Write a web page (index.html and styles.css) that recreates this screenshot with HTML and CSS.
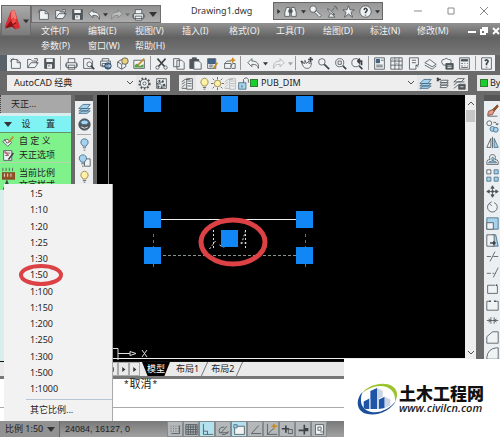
FILE: index.html
```html
<!DOCTYPE html>
<html lang="zh-CN">
<head>
<meta charset="utf-8">
<title>Drawing1.dwg</title>
<link rel="stylesheet" href="styles.css">
</head>
<body>
<svg class="sprite" aria-hidden="true">
  <symbol id="new" viewBox="0 0 16 16"><path class="p" d="M3 3h7l4 4v7H3z"/><path d="M10 3v4h4M2 2l2 2M5 1v2M1 5h2"/></symbol>
  <symbol id="open" viewBox="0 0 16 16"><path class="p" d="M2 13V3h4l2 2h5v3M2 13l4-6h9l-4 6zM10 2h4v3"/></symbol>
  <symbol id="save" viewBox="0 0 16 16"><path class="d" d="M2 2h12v12H2z"/><path class="w" d="M4 2h8v4H4zM5 9h6v5H5z"/><path d="M6 11h3"/></symbol>
  <symbol id="print" viewBox="0 0 16 16"><path class="p" d="M4 7V2h8v5M2 7h12v6H2zM4 10h8v5H4z"/><path d="M1 8v4M15 8v4"/></symbol>
  <symbol id="preview" viewBox="0 0 16 16"><path class="p" d="M2 2h8l3 3v9H2z"/><circle class="p" cx="9" cy="9" r="3"/><path class="bold" d="m11 11 4 4"/></symbol>
  <symbol id="publish" viewBox="0 0 16 16"><path class="p" d="M4 5V2h8v3M2 5h12v6H2zM4 8h7v4H4z"/><circle class="blue" cx="11" cy="11" r="4"/><path class="l" d="M8 11h6m-2-2 2 2-2 2"/></symbol>
  <symbol id="cube" viewBox="0 0 16 16"><path class="p" d="m2 6 5-3 5 3v6l-5 3-5-3zM2 6l5 3 5-3M7 9v6"/><circle class="gold" cx="11" cy="5" r="4"/></symbol>
  <symbol id="sheet" viewBox="0 0 16 16"><path class="p" d="M1 4h13v10H1z"/><path class="green" d="m2 10 3-2 3 3 5-2v4H2z"/><path class="goldline" d="m6 10 8-8"/></symbol>
  <symbol id="cut" viewBox="0 0 16 16"><path class="bold" d="m3 2 9 10M13 2 4 12"/><circle class="p" cx="3" cy="13" r="2"/><circle class="p" cx="13" cy="13" r="2"/></symbol>
  <symbol id="copy" viewBox="0 0 16 16"><path class="p" d="M2 2h7v10H2zM6 4h6l3 3v8H6z"/></symbol>
  <symbol id="paste" viewBox="0 0 16 16"><path class="d" d="M1 3h11v11H1zM4 1h5v3H4z"/><path class="p" d="M6 5h6l3 3v7H6z"/></symbol>
  <symbol id="match" viewBox="0 0 16 16"><path class="p" d="M2 2h10v12H2z"/><path class="blue" d="M3 3h8v5H3z"/><path d="M4 10h5M4 12h4"/><path class="goldline" d="m14 7-5 7"/></symbol>
  <symbol id="brush" viewBox="0 0 16 16"><path class="p" d="M2 2h10v12H2z"/><path d="M4 5h6M4 8h4"/><path class="pinkline" d="m3 3 5 5"/><path class="bold" d="m14 5-6 8"/></symbol>
  <symbol id="custom" viewBox="0 0 16 16"><path class="p" d="m1 8 5-3 6 4-5 5z"/><path class="goldline" d="m14 2-6 7"/><path d="m3 5 3 5M6 10l3-1"/></symbol>
  <symbol id="text" viewBox="0 0 16 16"><path class="bold" d="m2 13 4-10 4 10M3 9h6"/><circle cx="12" cy="11" r="2"/></symbol>
  <symbol id="blockedit" viewBox="0 0 16 16"><path class="p" d="M2 8h8v6H2zM2 8l3-3h5"/><path d="m9 12 3-4h3v6h-4"/><path class="goldline" d="M9 4h6M12 1v6"/></symbol>
  <symbol id="undo" viewBox="0 0 16 16"><path class="p" d="m1 7 5-5v3c6 0 9 3 8 9-1-4-3-5-8-5v3z"/></symbol>
  <symbol id="redo" viewBox="0 0 16 16"><path class="p" d="m15 7-5-5v3c-6 0-9 3-8 9 1-4 3-5 8-5v3z"/></symbol>
  <symbol id="pan" viewBox="0 0 16 16"><path class="p" d="m2 7 4 1V4l2 4 3-3v3l3-1c0 5-2 7-5 7-4 0-5-2-7-7z"/><path class="bold" d="M10 3h6M13 0v6M1 5l3 2"/></symbol>
  <symbol id="zoom" viewBox="0 0 16 16"><circle class="p" cx="6" cy="6" r="4"/><path class="bold" d="m9 9 6 6"/></symbol>
  <symbol id="zoomwin" viewBox="0 0 16 16"><circle class="p" cx="7" cy="7" r="5"/><path d="M5 5h4v4H5z"/><path class="bold" d="m11 11 4 4"/></symbol>
  <symbol id="zoomprev" viewBox="0 0 16 16"><circle class="p" cx="6" cy="7" r="5"/><path class="bold" d="m10 11 4 4M8 5h5v5M8 5l3-3M8 5l3 3"/></symbol>
  <symbol id="props" viewBox="0 0 16 16"><path class="p" d="M2 1h12v14H2z"/><path class="blue" d="M4 3h4v4H4z"/><path d="M10 4h3M4 10h8M4 12h8"/></symbol>
  <symbol id="gridwin" viewBox="0 0 16 16"><path class="p" d="M1 1h14v14H1z"/><path d="M6 1v14M11 1v14M1 5h14M1 10h14M3 3h1M8 3h1M8 8h1M13 12h1"/></symbol>
  <symbol id="toolpal" viewBox="0 0 16 16"><path class="p" d="M3 1h11v9h-3v5H3z"/><path d="M6 4h5M6 7h5M11 10l3 2"/></symbol>
  <symbol id="sheets" viewBox="0 0 16 16"><path class="p" d="m1 7 6-4 8 6-5 3zM1 10l9 5 5-4"/></symbol>
  <symbol id="markup" viewBox="0 0 16 16"><path class="p" d="M1 7q-1-4 3-4 2-3 5 0 5 0 3 4v3H3z"/><path class="d" d="M6 8h9v7H6z"/><path class="l" d="M8 11h5M8 13h5"/></symbol>
  <symbol id="calc" viewBox="0 0 16 16"><path class="p" d="M2 1h12v14H2z"/><path class="d" d="M4 3h8v2H4z"/><path d="M4 8h2m2 0h1m2 0h1M4 11h2m2 0h1m2 0h1M4 13h8"/></symbol>
  <symbol id="help" viewBox="0 0 16 16"><path class="p" d="M2 1h12v14H2z"/><path class="bold" d="M6 5q2-3 4 0 0 2-2 3v2M8 12v1"/></symbol>
  <symbol id="gear" viewBox="0 0 16 16"><circle class="gearring" cx="8" cy="8" r="6"/><circle class="p" cx="8" cy="8" r="5"/><circle class="p" cx="8" cy="8" r="2"/></symbol>
  <symbol id="gear2" viewBox="0 0 16 16"><path class="p" d="M2 2h12v12H2z"/><circle class="gearring" cx="7" cy="9" r="4"/><path d="M3 5l9 9M3 11l8-8M10 11h4"/></symbol>
  <symbol id="layers" viewBox="0 0 16 16"><path class="p" d="m5 7 2-3h8l-2 3zM5 10l2-3h8l-2 3zM5 13l2-3h8l-2 3z"/><path class="bold" d="M1 3h5M1 3l2-2M1 3l2 2"/></symbol>
  <symbol id="layerprops" viewBox="0 0 16 16"><path class="p" d="M1 6l4-3h6M1 9l4-3M1 13l4-4M7 2h7v13H7z"/><path d="M8 5h5M8 8h5M8 11h5M1 14h6"/></symbol>
  <symbol id="layerstate" viewBox="0 0 16 16"><path class="p" d="m1 6 5-4h8l-4 4zM1 10l5-4h8M1 14l5-4"/><path class="d" d="M7 9h8v6H7z"/><path class="l" d="M9 12h4"/></symbol>
  <symbol id="layerblue" viewBox="0 0 16 16"><path class="sky" d="m1 8 5-5h9l-4 5zM1 11l4-3h10l-4 3zM1 14l4-3h10l-4 3z"/></symbol>
  <symbol id="bulb" viewBox="0 0 16 16"><path class="yellow" d="M6 11q-4-4-2-7 4-5 8 0 2 3-2 7z"/><path d="M6 13h4M7 15h2"/></symbol>
  <symbol id="bluebulb" viewBox="0 0 16 16"><path class="sky" d="M6 10q-4-4-2-7 4-4 8 0 2 3-2 7z"/><path d="M6 12h4M7 15h2"/></symbol>
  <symbol id="boxbulb" viewBox="0 0 16 16"><path class="p" d="M8 6h7v9H8z"/><path class="sky" d="M4 10q-4-4-2-7 4-4 8 0 2 3-2 7z"/><path d="M4 12h4M5 15h2"/></symbol>
  <symbol id="sun" viewBox="0 0 16 16"><circle class="yellow" cx="8" cy="8" r="4"/><path d="M8 0v3M8 13v3M0 8h3M13 8h3M2 2l2 2M12 12l2 2M2 14l2-2M12 4l2-2"/></symbol>
  <symbol id="lock" viewBox="0 0 16 16"><path class="sky" d="M2 7h9v8H2z"/><path d="M8 7V3q3-4 6 0v4M6 10v3"/></symbol>
  <symbol id="palette" viewBox="0 0 16 16"><circle class="d" cx="8" cy="8" r="7"/><path class="sky" d="M3 5q5-5 10 0l-2 3H5z"/><path class="l" d="M4 11q4 3 8 0"/></symbol>
  <symbol id="erase" viewBox="0 0 16 16"><path class="brown" d="m8 7 6-6 1 2-5 6z"/><path class="pink" d="m3 9 5-2 2 2-2 4-6 1z"/><path d="M2 15h12"/></symbol>
  <symbol id="copyobj" viewBox="0 0 16 16"><circle class="p" cx="4" cy="4" r="3"/><circle class="sky" cx="8" cy="11" r="3"/><circle class="sky" cx="12" cy="12" r="3"/><path d="M9 3q4-1 5 3m-2-1 2 1 1-2"/></symbol>
  <symbol id="mirror" viewBox="0 0 16 16"><path class="p" d="M6 3v11H1z"/><path class="sky" d="M10 3v11h5z"/><path d="M8 1v14"/></symbol>
  <symbol id="offset" viewBox="0 0 16 16"><path class="p" d="M1 14v-3q0-3 4-3-2-6 3-6 5 0 3 6 4 0 4 3v3z"/><path class="sky" d="M3 12q0-2 5-2-2-4 0-5 3 1 1 5 4 0 4 2z"/></symbol>
  <symbol id="array" viewBox="0 0 16 16"><path class="p" d="M1 1h5v5H1z"/><path class="sky" d="M10 1h5v5h-5zM1 10h5v5H1zM10 10h5v5h-5z"/></symbol>
  <symbol id="move" viewBox="0 0 16 16"><path d="M8 1v14M1 8h14"/><path class="d" d="m6 4 2-3 2 3zM6 12l2 3 2-3zM4 6 1 8l3 2zM12 6l3 2-3 2zM7 7h2v2H7z"/></symbol>
  <symbol id="rotate" viewBox="0 0 16 16"><path class="p" d="M4 3a6 6 0 1 0 6-1M7 1 4 3l3 3"/></symbol>
  <symbol id="scale" viewBox="0 0 16 16"><path class="sky" d="M1 1h14v14H1z"/><path class="w" d="M1 7h8v8H1z"/><path d="M1 7h8v8H1z"/></symbol>
  <symbol id="stretch" viewBox="0 0 16 16"><path class="sky" d="M8 1h4l3 14H8z"/><path class="p" d="M1 1h9v14H1z"/><path class="bold" d="M5 11h6m-2-2 2 2-2 2"/></symbol>
  <symbol id="trim" viewBox="0 0 16 16"><path d="M1 8h5m3 0h6M11 2 5 14"/></symbol>
  <symbol id="extend" viewBox="0 0 16 16"><path d="M1 9h5m2 0h2m1 0h1M15 2 9 14"/></symbol>
  <symbol id="breakpt" viewBox="0 0 16 16"><path class="p" d="M11 4H2v10h12V5"/><path class="bold" d="M12 4h2"/></symbol>
  <symbol id="break" viewBox="0 0 16 16"><path class="p" d="M5 4H1v11h14V4h-4"/><path class="bold" d="M5 3v2M11 3v2"/></symbol>
  <symbol id="join" viewBox="0 0 16 16"><path d="M1 8h14M6 4v8M10 4v8M3 6l3 2-3 2M13 6l-3 2 3 2"/></symbol>
  <symbol id="chamfer" viewBox="0 0 16 16"><path class="p" d="M1 15V7l7-6h7v14z"/></symbol>
  <symbol id="fillet" viewBox="0 0 16 16"><path class="p" d="M1 15v-2Q2 2 13 1h2v14z"/></symbol>
  <symbol id="binoc" viewBox="0 0 16 16"><path class="p" d="M3 3h4v11H1V9zM9 3h4l2 6v5H9z"/><path class="d" d="M6 6h4v3H6z"/></symbol>
  <symbol id="key" viewBox="0 0 16 16"><circle class="p" cx="5" cy="5" r="4"/><path class="p" d="m7 9 2-2 6 6-2 2z"/></symbol>
  <symbol id="dish" viewBox="0 0 16 16"><path class="p" d="M2 4q1 7 9 8L2 4zM5 11l-2 4h8l-3-3M7 7l4-4"/><path d="M10 1q4 1 4 5"/></symbol>
  <symbol id="star" viewBox="0 0 16 16"><path class="p" d="m8 1 2 5h5l-4 3 2 6-5-4-5 4 2-6-4-3h5z"/></symbol>
  <symbol id="question" viewBox="0 0 16 16"><circle class="p" cx="8" cy="8" r="7"/><path class="bold" d="M6 6q2-4 4 0 0 1-2 3v1M8 12v1"/></symbol>
  <symbol id="chev" viewBox="0 0 8 8"><path d="m1 2 3 3 3-3"/></symbol>
  <symbol id="tri" viewBox="0 0 8 8"><path class="solid" d="M0 2h8L4 7z"/></symbol>
  <symbol id="snap" viewBox="0 0 16 16"><path class="dots" d="M2 4h12M2 7h12M2 10h12"/><path d="M3 13h10V3"/></symbol>
  <symbol id="grid" viewBox="0 0 16 16"><path d="M1 2h14v12H1zM4 2v12M7 2v12M10 2v12M13 2v12M1 5h14M1 8h14M1 11h14"/></symbol>
  <symbol id="ortho" viewBox="0 0 16 16"><path d="M3 1v13h12M3 10h5v4"/></symbol>
  <symbol id="polar" viewBox="0 0 16 16"><path d="M3 12q-2-7 6-7M3 12h11M5 12l7-8M14 10q-2 5-8 4"/></symbol>
  <symbol id="osnap" viewBox="0 0 16 16"><path class="p" d="M2 4h12v10H2z"/><path class="sky" d="M1 2h4v4H1z"/></symbol>
  <symbol id="angle" viewBox="0 0 16 16"><path d="M12 3 3 13h12"/></symbol>
  <symbol id="ducs" viewBox="0 0 16 16"><path d="M3 1v13h12M3 14l8-8"/><path class="goldline" d="M8 4h7M11 1v7"/></symbol>
  <symbol id="dyn" viewBox="0 0 16 16"><path class="bold" d="M1 7h9M6 3v9"/><path d="M9 8h5v5H9z"/></symbol>
  <symbol id="lwt" viewBox="0 0 16 16"><path class="bold" d="M2 9h12M9 2v12M9 7h5"/></symbol>
  <symbol id="qp" viewBox="0 0 16 16"><path class="p" d="M3 2h10v12H3z"/><path d="M6 5h4v4H6zM9 11h4"/></symbol>
</svg>

<div class="app">
  <header class="titlebar">
    <div class="quick">
      <button aria-label="新建"><svg><use href="#new"/></svg></button>
      <button aria-label="打开"><svg><use href="#open"/></svg></button>
      <button aria-label="保存"><svg><use href="#save"/></svg></button>
      <button aria-label="放弃"><svg><use href="#undo"/></svg></button>
      <svg class="tiny"><use href="#tri"/></svg>
      <button class="faded" aria-label="重做"><svg><use href="#redo"/></svg></button>
      <svg class="tiny faded"><use href="#tri"/></svg>
      <button aria-label="打印"><svg><use href="#print"/></svg></button>
      <button class="narrow" aria-label="更多"><svg class="small"><use href="#tri"/></svg></button>
    </div>
    <h1>Drawing1.dwg</h1>
    <div class="info">
      <svg class="tiny right"><use href="#tri"/></svg>
      <button aria-label="搜索"><svg><use href="#binoc"/></svg></button>
      <svg class="tiny"><use href="#tri"/></svg>
      <button aria-label="速博"><svg><use href="#key"/></svg></button>
      <button aria-label="通讯"><svg><use href="#dish"/></svg></button>
      <button aria-label="收藏"><svg><use href="#star"/></svg></button>
      <button aria-label="帮助"><svg><use href="#question"/></svg></button>
      <svg class="tiny"><use href="#tri"/></svg>
    </div>
    <div class="window">
      <button aria-label="最小化"><svg viewBox="0 0 8 8"><path d="M0 4h8"/></svg></button>
      <button aria-label="最大化"><svg viewBox="0 0 8 8"><path d="M1 1h6v6H1z"/></svg></button>
      <button aria-label="关闭"><svg viewBox="0 0 8 8"><path d="m0 0 8 8M8 0 0 8"/></svg></button>
    </div>
  </header>

  <nav class="menubar">
    <div class="menus">
      <a href="#">文件(F)</a><a href="#">编辑(E)</a><a href="#">视图(V)</a><a href="#">插入(I)</a><a href="#">格式(O)</a><a href="#">工具(T)</a><a href="#">绘图(D)</a><a href="#">标注(N)</a><a href="#">修改(M)</a><a href="#">参数(P)</a><a href="#">窗口(W)</a><a href="#">帮助(H)</a>
    </div>
    <div class="docwin">
      <button aria-label="最小化图形"><svg viewBox="0 0 8 8"><path d="M0 5h8"/></svg></button>
      <button aria-label="还原图形"><svg viewBox="0 0 8 8"><path d="M1 3h4v4H1zM3 3V1h4v4H5"/></svg></button>
      <button aria-label="关闭图形"><svg viewBox="0 0 8 8"><path d="m1 1 6 6M7 1 1 7"/></svg></button>
    </div>
  </nav>

  <button class="appbtn" aria-label="应用程序菜单">
    <svg viewBox="0 0 20 26"><path fill="#d92f33" d="M8 2h4l6 19-5 2-4-5-7 4-1-3z"/><path fill="#f27873" d="M8 2h4l2 9-6 3z"/><path fill="#8d1118" d="m6 15 4-5 4 6-4 2 3 5-4-3-8 2z"/><path fill="#f04b49" d="m10 9 4 5-4 3-2-3z"/></svg>
    <svg class="small"><use href="#tri"/></svg>
  </button>

  <div class="toolbar">
    <button aria-label="新建"><svg><use href="#new"/></svg></button>
    <button aria-label="打开"><svg><use href="#open"/></svg></button>
    <button aria-label="保存"><svg><use href="#save"/></svg></button>
    <i></i>
    <button aria-label="打印"><svg><use href="#print"/></svg></button>
    <button aria-label="预览"><svg><use href="#preview"/></svg></button>
    <button aria-label="发布"><svg><use href="#publish"/></svg></button>
    <button aria-label="三维"><svg><use href="#cube"/></svg></button>
    <button aria-label="图纸"><svg><use href="#sheet"/></svg></button>
    <i></i>
    <button aria-label="剪切"><svg><use href="#cut"/></svg></button>
    <button aria-label="复制"><svg><use href="#copy"/></svg></button>
    <button aria-label="粘贴"><svg><use href="#paste"/></svg></button>
    <button aria-label="特性匹配"><svg><use href="#match"/></svg></button>
    <button aria-label="块编辑"><svg><use href="#blockedit"/></svg></button>
    <i></i>
    <button class="wide" aria-label="放弃"><svg><use href="#undo"/></svg></button>
    <svg class="tiny"><use href="#tri"/></svg>
    <button class="wide faded" aria-label="重做"><svg><use href="#redo"/></svg></button>
    <svg class="tiny faded"><use href="#tri"/></svg>
    <i></i>
    <button aria-label="平移"><svg><use href="#pan"/></svg></button>
    <button aria-label="缩放"><svg><use href="#zoom"/></svg></button>
    <button aria-label="窗口缩放"><svg><use href="#zoomwin"/></svg></button>
    <button aria-label="上一个"><svg><use href="#zoomprev"/></svg></button>
    <i></i>
    <button aria-label="特性"><svg><use href="#props"/></svg></button>
    <button aria-label="设计中心"><svg><use href="#gridwin"/></svg></button>
    <button aria-label="工具选项板"><svg><use href="#toolpal"/></svg></button>
    <button aria-label="图纸集"><svg><use href="#sheets"/></svg></button>
    <button aria-label="标记集"><svg><use href="#markup"/></svg></button>
    <button aria-label="计算器"><svg><use href="#calc"/></svg></button>
    <i></i>
    <button aria-label="帮助"><svg><use href="#help"/></svg></button>
  </div>

  <div class="toolrow">
    <div class="group">
      <label class="combo workspace"><select aria-label="工作空间"><option>AutoCAD 经典</option></select><svg class="small"><use href="#chev"/></svg></label>
      <button aria-label="设置"><svg><use href="#gear"/></svg></button>
      <button aria-label="工作空间设置"><svg><use href="#gear2"/></svg></button>
    </div>
    <div class="group layer">
      <button aria-label="图层特性"><svg><use href="#layerprops"/></svg></button>
      <label class="combo">
        <svg><use href="#bulb"/></svg><svg><use href="#sun"/></svg><svg class="faded"><use href="#layerprops"/></svg><svg><use href="#lock"/></svg><b class="swatch"></b>
        <select aria-label="图层"><option>PUB_DIM</option></select><svg class="small"><use href="#chev"/></svg>
      </label>
      <button aria-label="当前图层"><svg><use href="#layerblue"/></svg></button>
      <button aria-label="上一图层"><svg><use href="#layers"/></svg></button>
      <button aria-label="图层状态"><svg><use href="#layerstate"/></svg></button>
    </div>
    <div class="group color"><b class="swatch"></b><span>By</span></div>
  </div>

  <main class="work">
    <aside class="palette">
      <h2>天正...</h2>
      <div class="settings"><svg class="small"><use href="#tri"/></svg><span>设</span><span>置</span></div>
      <ul>
        <li><svg><use href="#custom"/></svg>自 定 义</li>
        <li><svg><use href="#brush"/></svg>天正选项</li>
        <li class="ruled"><svg viewBox="0 0 16 16"><path d="M1 1v4M5 1v4M9 1v4M13 1v4"/><path class="brown" d="M0 7h16v8H0z"/><path class="l" d="M3 8v4M7 8v4M11 8v4"/></svg>当前比例</li>
        <li class="last"><svg><use href="#text"/></svg>文字样式</li>
      </ul>
    </aside>
    <div class="dock">
      <button aria-label="图层"><svg><use href="#layerblue"/></svg></button>
      <button aria-label="颜色"><svg><use href="#palette"/></svg></button>
      <hr>
      <button aria-label="关闭图层"><svg><use href="#bluebulb"/></svg></button>
      <button aria-label="隔离图层"><svg><use href="#boxbulb"/></svg></button>
      <button aria-label="打开图层"><svg><use href="#bulb"/></svg></button>
    </div>
    <section class="drawing">
      <svg viewBox="0 0 368 265" width="368" height="265" role="img" aria-label="图形">
        <path stroke="#8b8b8b" d="M11.500 0v262"/>
        <path stroke="#eee" d="M56 124.500h152M0 263.500h368"/>
        <path stroke="#88938b" stroke-dasharray="3 2" d="M56 160.500h152"/>
        <path stroke="#657066" stroke-dasharray="3 3" d="M56.500 139v36M208.500 139v36"/>
        <path stroke="#ddd" stroke-dasharray="2 2" d="M116.500 135v19m2-8-6 8m10-4 3 2 7-1M148.500 135v19m-4-5 4-13m-5 12h8"/>
        <path fill="#1087f5" stroke="none" d="M47 1h17v16H47zM124 1h17v16h-17zM199 1h17v16h-17zM47 116h17v17H47zM199 116h17v17h-17zM47 152h17v17H47zM199 152h17v17h-17zM124 135h17v17h-17z"/>
        <ellipse cx="136" cy="147" rx="32" ry="22" stroke="#dc4145" stroke-width="5"/>
        <path stroke="#ddd" d="M16 253.500h5v12h-5M21 258.500h12m0-2 6 2-6 2zM45 255l5 7m0-7-5 7"/>
      </svg>
    </section>
    <div class="scroll"><svg class="small up"><use href="#chev"/></svg><b></b><svg class="small"><use href="#chev"/></svg></div>
    <div class="modify">
      <button aria-label="删除"><svg><use href="#erase"/></svg></button>
      <button aria-label="复制"><svg><use href="#copyobj"/></svg></button>
      <button aria-label="镜像"><svg><use href="#mirror"/></svg></button>
      <button aria-label="偏移"><svg><use href="#offset"/></svg></button>
      <button aria-label="阵列"><svg><use href="#array"/></svg></button>
      <button aria-label="移动"><svg><use href="#move"/></svg></button>
      <button aria-label="旋转"><svg><use href="#rotate"/></svg></button>
      <button aria-label="缩放"><svg><use href="#scale"/></svg></button>
      <button aria-label="拉伸"><svg><use href="#stretch"/></svg></button>
      <button aria-label="修剪"><svg><use href="#trim"/></svg></button>
      <button aria-label="延伸"><svg><use href="#extend"/></svg></button>
      <button aria-label="打断于点"><svg><use href="#breakpt"/></svg></button>
      <button aria-label="打断"><svg><use href="#break"/></svg></button>
      <button aria-label="合并"><svg><use href="#join"/></svg></button>
      <button aria-label="倒角"><svg><use href="#chamfer"/></svg></button>
      <button aria-label="圆角"><svg><use href="#fillet"/></svg></button>
    </div>
  </main>

  <div class="lower">
    <div class="tabs">
      <button class="nav" aria-label="上一布局"><svg class="tiny left"><use href="#tri"/></svg></button>
      <button class="nav" aria-label="下一布局"><svg class="tiny right"><use href="#tri"/></svg></button>
      <button class="nav" aria-label="最后布局"><svg class="tiny right"><use href="#tri"/></svg></button>
      <button class="tab on">模型</button><button class="tab">布局1</button><button class="tab">布局2</button>
    </div>
    <div class="history">*取消*</div>
    <div class="command"></div>
  </div>

  <footer class="status">
    <button class="ratio">比例 1:50 <svg class="small"><use href="#tri"/></svg></button>
    <output>24084, 16127, 0</output>
    <div class="toggles">
      <button aria-label="捕捉"><svg><use href="#snap"/></svg></button>
      <button aria-label="栅格"><svg><use href="#grid"/></svg></button>
      <button class="on" aria-label="正交"><svg><use href="#ortho"/></svg></button>
      <button aria-label="极轴"><svg><use href="#polar"/></svg></button>
      <button class="on" aria-label="对象捕捉"><svg><use href="#osnap"/></svg></button>
      <button aria-label="对象追踪"><svg><use href="#angle"/></svg></button>
      <button aria-label="动态坐标"><svg><use href="#ducs"/></svg></button>
      <button aria-label="动态输入"><svg><use href="#dyn"/></svg></button>
      <button aria-label="线宽"><svg><use href="#lwt"/></svg></button>
      <button aria-label="快捷特性"><svg><use href="#qp"/></svg></button>
    </div>
  </footer>

  <div class="popup">
    <ul>
      <li>1:5</li><li>1:10</li><li>1:20</li><li>1:25</li><li>1:30</li>
      <li class="picked">1:50<svg viewBox="0 0 46 24"><ellipse cx="23" cy="12" rx="20" ry="9"/></svg></li>
      <li>1:100</li><li>1:150</li><li>1:200</li><li>1:250</li><li>1:300</li><li>1:500</li><li>1:1000</li>
    </ul>
    <div class="other">其它比例...</div>
  </div>

  <div class="brand">
    <svg viewBox="0 0 44 36">
      <path fill="#1b4e9b" d="M6 10C-2 18-1 30 10 33c12 3 26-4 31-14-6 8-17 14-26 12C4 29 2 19 6 10z"/>
      <path fill="#9bc42c" d="M5 12C12 2 28-1 37 4c6 4 6 10 3 16 0-7-2-12-9-15C22 2 12 6 5 12z"/>
      <path fill="#1f55a6" d="M7 20l6-3v11H9l-2-1zM14 9l7-3v22h-7zM23 18l6-3v12l-6 1z"/>
      <path fill="#c9d5e5" d="m13 17 1 1v10h-1zM21 6l6 3v6l-4 2v11h-2zM29 15l6 3v6l-6 3z"/>
    </svg>
    <div><strong>土木工程网</strong><em>www.civilcn.com</em></div>
  </div>
</div>
</body>
</html>
```
FILE: styles.css
```css
* { box-sizing: border-box; }
body { margin: 0; background: #666; font: 9px/16px "Noto Sans", "Noto Sans CJK SC", sans-serif; color: #222; }
button, select { font: inherit; color: inherit; border: 0; margin: 0; padding: 0; background: none; }
ul { list-style: none; margin: 0; padding: 0; }
a { color: inherit; text-decoration: none; }
h1, h2 { margin: 0; font-weight: 400; }

.sprite { position: absolute; width: 0; height: 0; }
svg { flex: none; width: 13px; height: 13px; display: block; fill: none; stroke: #4b5358; stroke-width: 1; }
.p { fill: #f0f3f4; }
.d { fill: #50585e; }
.w { fill: #f4f4f4; stroke: none; }
.l { stroke: #f4f4f4; }
.bold { stroke-width: 2; stroke: #3d4448; }
.solid { fill: #333; stroke: none; }
.blue { fill: #42688e; stroke: #2d4a68; }
.sky { fill: #a5d2ec; stroke: #456a82; }
.green { fill: #57a348; stroke: none; }
.gold { fill: #ecd27e; }
.goldline { stroke: #c58b27; stroke-width: 2; }
.pinkline { stroke: #c8606c; stroke-width: 2; }
.yellow { fill: #fff1a5; stroke: #8c7b42; }
.brown { fill: #955325; stroke: #77421d; }
.pink { fill: #e79a87; stroke: #794c41; }
.gearring { stroke-width: 3; stroke-dasharray: 2 2; }
.dots { stroke-dasharray: 1 2; }
.small { width: 8px; height: 8px; }
.tiny { width: 5px; height: 5px; }
.faded { opacity: .4; }
.up { transform: rotate(180deg); }
.right { transform: rotate(-90deg); }
.left { transform: rotate(90deg); }
.swatch { flex: none; width: 8px; height: 8px; background: #19cf2e; border: 1px solid #317b35; }

.app { position: relative; display: flex; flex-direction: column; min-height: 100vh; overflow: hidden; }
.titlebar { display: flex; align-items: flex-start; height: 23px; background: #fff; padding-left: 31px; }
.quick { display: flex; align-items: center; width: 130px; height: 18px; margin-top: 5px; padding-left: 3px; background: linear-gradient(#919191, #adadad); border: 1px solid #707070; }
.quick button { display: grid; place-items: center; width: 17px; }
.quick .narrow { width: 12px; }
h1 { margin: 3px 0 0 30px; width: 82px; font-size: 9px; line-height: 16px; white-space: nowrap; color: #333; }
.info { display: flex; align-items: center; justify-content: space-between; width: 110px; height: 18px; margin-top: 2px; padding: 0 2px; background: linear-gradient(#989898, #adadad); border: 1px solid #666; }
.window { display: flex; flex: 1; align-items: center; justify-content: space-around; height: 21px; padding-left: 18px; }
.window svg, .docwin svg { width: 8px; height: 8px; }
.window svg { stroke: #8a8a8a; }

.menubar { display: flex; justify-content: space-between; height: 32px; padding-left: 41px; background: linear-gradient(#929292, #626262 45%, #777); color: #f2f2f2; }
.menus { display: grid; grid-template-columns: repeat(9, 47px); grid-auto-rows: 15px; line-height: 16px; white-space: nowrap; }
.docwin { display: flex; height: 16px; gap: 4px; align-items: center; }
.docwin svg { stroke: #fff; stroke-width: 2; }
.appbtn { position: absolute; top: 5px; left: 1px; display: flex; align-items: center; gap: 1px; width: 30px; height: 31px; padding-left: 2px; background: linear-gradient(#a9a9a9, #7c7c7c); border: 1px solid #6a6a6a; }
.appbtn svg:first-child { width: 18px; height: 25px; stroke: none; }
.appbtn .small { width: 6px; }

.toolbar { display: flex; align-items: center; height: 16px; margin-right: 5px; border-left: 7px solid #59616a; background: #edeff0; }
.toolbar button, .group > button { display: grid; place-items: center; flex: none; width: 17px; height: 16px; }
.toolbar .wide { width: 20px; }
.toolbar i { flex: none; width: 1px; height: 14px; margin: 0 2px; background: #999; }

.toolrow { display: flex; gap: 9px; height: 24px; padding: 4px 0 4px 7px; background: #6a6a6a; }
.group { display: flex; align-items: center; height: 16px; background: #e7e7e7; }
.layer { flex: 1; }
.combo { display: flex; flex: 1; align-items: center; height: 16px; padding: 0 2px; background: #eee; }
.combo select { flex: 1; min-width: 0; appearance: none; outline: 0; line-height: 16px; }
.workspace { flex: none; width: 129px; padding-left: 7px; }
.layer .combo .swatch { margin-right: 3px; }
.color { width: 23px; padding-left: 3px; gap: 2px; overflow: hidden; }

.work { display: flex; flex: 1; height: 266px; min-height: 266px; background: #6a6a6a; }
.palette { width: 71px; background: #d8eeee; }
.palette h2 { height: 18px; padding-left: 10px; font-size: 9px; line-height: 18px; background: #a8a8a8; border-left: 1px dotted #444; }
.settings { display: flex; align-items: center; justify-content: space-between; height: 16px; margin-top: 3px; padding: 0 16px 0 4px; background: #7ff3f4; }
.settings span:last-child { margin-left: 6px; }
.palette ul { padding-top: 1px; background: #7ff28b; border-top: 1px solid #619667; }
.palette li { display: flex; align-items: center; gap: 4px; height: 14px; padding-left: 2px; white-space: nowrap; }
.palette .ruled { height: 18px; padding-top: 3px; border-top: 1px solid #b4d7ae; }
.palette .last { height: 10px; }
.dock { display: flex; flex-direction: column; align-items: center; width: 18px; margin-left: 4px; border-top: 6px solid #555; background: #eceeef; gap: 1px; }
.dock hr { width: 14px; margin: 1px 0; border: 0; border-top: 1px solid #aaa; }
.dock button, .modify button { display: grid; place-items: center; height: 15px; }
.drawing { flex: 1; min-width: 0; margin-left: 4px; overflow: hidden; background: #000; }
.drawing svg { width: 368px; height: 265px; }
.scroll { display: flex; flex-direction: column; align-items: center; justify-content: space-between; width: 11px; padding: 4px 1px; background: #eee; }
.scroll b { width: 9px; height: 12px; margin: 3px 0 auto; background: #c6c6c6; }
.modify { display: flex; flex-direction: column; justify-content: space-between; width: 16px; margin: 0 0 0 8px; padding-top: 2px; border-top: 6px solid #555; background: #eceff1; }

.tabs { display: flex; height: 15px; padding-left: 107px; background: #eaeaea; border-top: 1px solid #111; }
.nav { display: grid; place-items: center; width: 11px; border: 1px solid #aaa; }
.tab { position: relative; padding: 0 6px; line-height: 14px; }
.tab::after { content: ""; position: absolute; top: 0; right: 0; width: 1px; height: 14px; background: #777; transform: skewX(-24deg); }
.on.tab { margin-left: 2px; padding: 0 5px; background: #000; color: #fff; clip-path: polygon(0 0, 100% 0, 80% 100%, 20% 100%); }
.history { height: 31px; padding-left: 123px; border-top: 3px solid #777; background: #fff; font: 11px/12px "Liberation Mono", "Noto Sans CJK SC", monospace; }
.command { height: 14px; border-top: 1px solid #aaa; background: #fff; }

.status { display: flex; height: 16px; background: linear-gradient(#797979, #a1a1a1); white-space: nowrap; }
.ratio { display: flex; align-items: center; gap: 4px; width: 60px; padding-left: 5px; border-right: 1px solid #666; background: #929292; }
.status output { width: 107px; padding-left: 5px; font: 9px/17px "Liberation Sans", sans-serif; }
.toggles { display: flex; }
.toggles button { display: grid; place-items: center; width: 16px; background: #b4b8ba; border: 1px solid #858a8c; }
.toggles .on { background: #b4e1ee; }

.popup { position: absolute; left: 4px; top: 184px; bottom: 16px; display: flex; flex-direction: column; width: 109px; padding-top: 2px; background: #f2f2f2; border-right: 1px solid #aaa; }
.popup ul { flex: 1; display: flex; flex-direction: column; justify-content: space-between; }
.popup li { height: 16px; padding-left: 26px; }
.popup .picked { position: relative; }
.picked svg { position: absolute; left: 14px; top: -4px; width: 46px; height: 24px; stroke: #dc4145; stroke-width: 4; }
.other { height: 22px; margin: 2px 0 0 22px; padding-left: 4px; border-top: 1px solid #b9c7d5; line-height: 20px; }

.brand { position: absolute; right: 0; bottom: 0; display: flex; align-items: center; width: 156px; height: 78px; padding: 3px 0 0 13px; background: #fff; }
.brand > svg { width: 42px; height: 35px; stroke: none; }
.brand strong, .brand em { display: block; white-space: nowrap; }
.brand strong { font: 900 17px/17px "Noto Sans CJK SC", sans-serif; color: #111; }
.brand em { font: italic 600 11px/14px "Open Sans", "Noto Sans", sans-serif; }
```
